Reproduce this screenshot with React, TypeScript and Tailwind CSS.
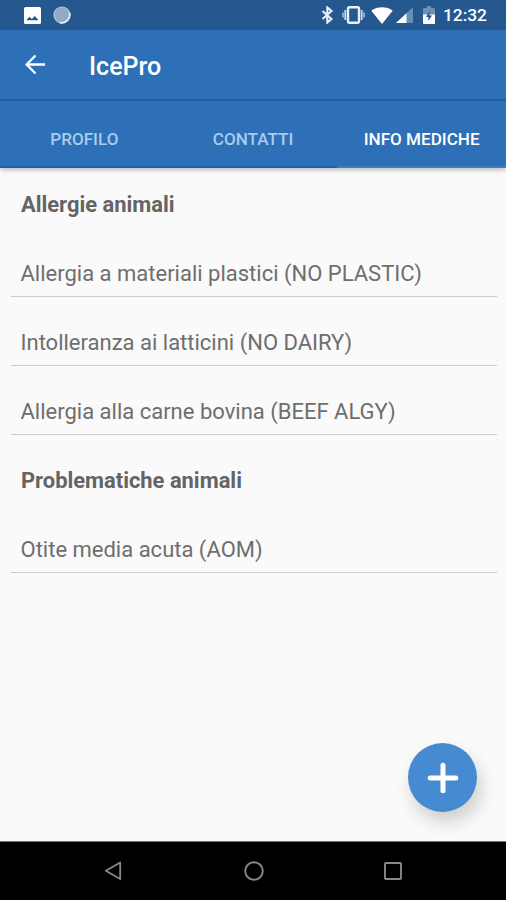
import type { ReactNode } from "react";

const tabs = ["PROFILO", "CONTATTI", "INFO MEDICHE"];

const sections = [
  {
    title: "Allergie animali",
    items: [
      "Allergia a materiali plastici (NO PLASTIC)",
      "Intolleranza ai latticini (NO DAIRY)",
      "Allergia alla carne bovina (BEEF ALGY)",
    ],
  },
  {
    title: "Problematiche animali",
    items: ["Otite media acuta (AOM)"],
  },
];

function StatusBar() {
  return (
    <div className="h-[30px] shrink-0 bg-[#24588f] flex items-center justify-between pl-[24px] pr-[19px] text-white">
      <div className="flex items-center gap-[12px]">
        {/* Picture notification */}
        <svg width="17" height="17" viewBox="0 0 17 17">
          <rect width="17" height="17" rx="1.5" fill="#fff" />
          <path d="M3 13.2 V12.2 L5.5 9.8 L7.8 12 L10.8 9 L14 12.4 V13.2 Z" fill="#24588f" />
        </svg>
        <svg width="18" height="18" viewBox="0 0 18 18">
          <circle cx="9" cy="9" r="8" fill="#93aac5" stroke="#b7c8da" strokeWidth="1.2" />
          <path d="M16.5 7 A8 8 0 0 1 7 16.6" fill="none" stroke="#e6eef6" strokeWidth="1.8" />
        </svg>
      </div>

      <div className="flex items-center">
        {/* Bluetooth */}
        <svg className="mr-[8px]" width="13" height="18" viewBox="0 0 13 18">
          <path d="M1.5 5 L10.5 13 L6.3 16.6 V1.4 L10.5 5 L1.5 13" fill="none" stroke="#e8f0f8" strokeWidth="2.1" />
        </svg>
        {/* Vibrate */}
        <svg className="mr-[6px]" width="23" height="18" viewBox="0 0 23 18">
          <rect x="6" y="1.2" width="11" height="15.6" rx="1.5" fill="none" stroke="#e8f0f8" strokeWidth="2.4" />
          <path d="M3.3 4 V14 M19.7 4 V14" stroke="#c5d5e6" strokeWidth="1.9" />
          <path d="M1 6.5 V11.5 M22 6.5 V11.5" stroke="#9db6d0" strokeWidth="1.7" />
        </svg>
        {/* Wifi */}
        <svg className="mr-[3px]" width="22" height="17" viewBox="0 0 22 17">
          <path d="M11 17 L0.3 3.8 C6 -0.8 16 -0.8 21.7 3.8 Z" fill="#fff" />
        </svg>
        {/* Signal */}
        <svg className="mr-[10px]" width="17" height="16" viewBox="0 0 17 16">
          <path d="M17 0 V16 H0 Z" fill="#6a8db4" />
          <path d="M10.5 6.2 V16 H0 Z" fill="#fff" />
        </svg>
        {/* Battery */}
        <svg className="mr-[8px]" width="12" height="18" viewBox="0 0 12 18">
          <path d="M4 0 H8 V2 H11 Q12 2 12 3 V9 H0 V3 Q0 2 1 2 H4 Z" fill="#6f90b6" />
          <path d="M0 8.5 H12 V17 Q12 18 11 18 H1 Q0 18 0 17 Z" fill="#fff" />
          <path d="M6.6 5 L3 11 H5.4 V15 L9 9.4 H6.6 Z" fill="#24588f" />
        </svg>
        <span className="text-[17.4px] leading-none font-medium pt-[2px]">12:32</span>
      </div>
    </div>
  );
}

function AppBar() {
  return (
    <header className="h-[71px] shrink-0 bg-[#2d70b7] border-b-2 border-[#2562a4] flex items-center text-white">
      <svg className="ml-[25px]" width="21" height="21" viewBox="0 0 21 21">
        <path d="M20 10.5 H2 M10.5 1.5 L1.6 10.5 L10.5 19.5" fill="none" stroke="#fff" strokeWidth="2.3" />
      </svg>
      <h1 className="ml-[43px] text-[25px] leading-none font-medium pt-[3px]">IcePro</h1>
    </header>
  );
}

function Row({ children }: { children: ReactNode }) {
  return (
    <li className="h-[69.2px] ml-[11px] mr-[9px] pl-[9.5px] border-b-[1.5px] border-[#cbcbcb] flex items-end pb-[9px] text-[22px] leading-[26px] text-[#6e6e6e] whitespace-nowrap">
      {children}
    </li>
  );
}

export default function App() {
  return (
    <div className="h-[900px] w-[506px] overflow-hidden bg-[#fafafa] flex flex-col font-[Roboto,sans-serif]">
      <StatusBar />
      <AppBar />

      {/* Tabs */}
      <nav className="relative z-10 h-[67px] shrink-0 bg-[#2d70b7] grid grid-cols-3 shadow-[0_2px_5px_rgba(0,0,0,0.26)]">
        {tabs.map((tab) => (
          <button
            key={tab}
            className={
              tab === "INFO MEDICHE"
                ? "text-[17.1px] font-medium pt-[12px] text-white border-b-2 border-[#3b7dc4] whitespace-nowrap"
                : "text-[17.1px] font-medium pt-[12px] text-[#a9cbee] border-b-2 border-[#1965ae] whitespace-nowrap"
            }
          >
            {tab}
          </button>
        ))}
      </nav>

      <main className="relative grow">
        {sections.map((section, i) => (
          <section key={section.title}>
            <h2
              className={
                i === 0
                  ? "h-[59.5px] pl-[21px] flex items-end pb-[10px] text-[21.9px] leading-[26px] font-bold text-[#646464]"
                  : "h-[69.2px] pl-[21px] flex items-end pb-[10px] text-[21.9px] leading-[26px] font-bold text-[#646464]"
              }
            >
              {section.title}
            </h2>
            <ul>
              {section.items.map((item) => (
                <Row key={item}>{item}</Row>
              ))}
            </ul>
          </section>
        ))}

        <button className="absolute right-[29px] bottom-[29px] size-[69px] rounded-full bg-[#468bd2] flex items-center justify-center shadow-[4px_10px_18px_rgba(0,0,0,0.18)]">
          <svg width="32" height="32" viewBox="0 0 32 32">
            <path d="M16 3.2 V28.8 M3.2 16 H28.8" stroke="#fff" strokeWidth="5" strokeLinecap="round" />
          </svg>
        </button>
      </main>

      {/* Navigation bar */}
      <footer className="h-[59px] shrink-0 bg-black border-t border-[#777] grid grid-cols-[113px_281px_1fr] items-center">
        <svg className="justify-self-end -mr-[9px]" width="18" height="20" viewBox="0 0 18 20">
          <path d="M16.2 1.5 V18 L1.8 9.8 Z" fill="none" stroke="#888" strokeWidth="1.8" strokeLinejoin="round" />
        </svg>
        <svg className="justify-self-center" width="22" height="22" viewBox="0 0 22 22">
          <circle cx="11" cy="11" r="8.8" fill="none" stroke="#888" strokeWidth="1.9" />
        </svg>
        <svg className="-ml-[10px]" width="18" height="18" viewBox="0 0 18 18">
          <rect x="1" y="1" width="16" height="16" rx="0.8" fill="none" stroke="#888" strokeWidth="1.9" />
        </svg>
      </footer>
    </div>
  );
}
